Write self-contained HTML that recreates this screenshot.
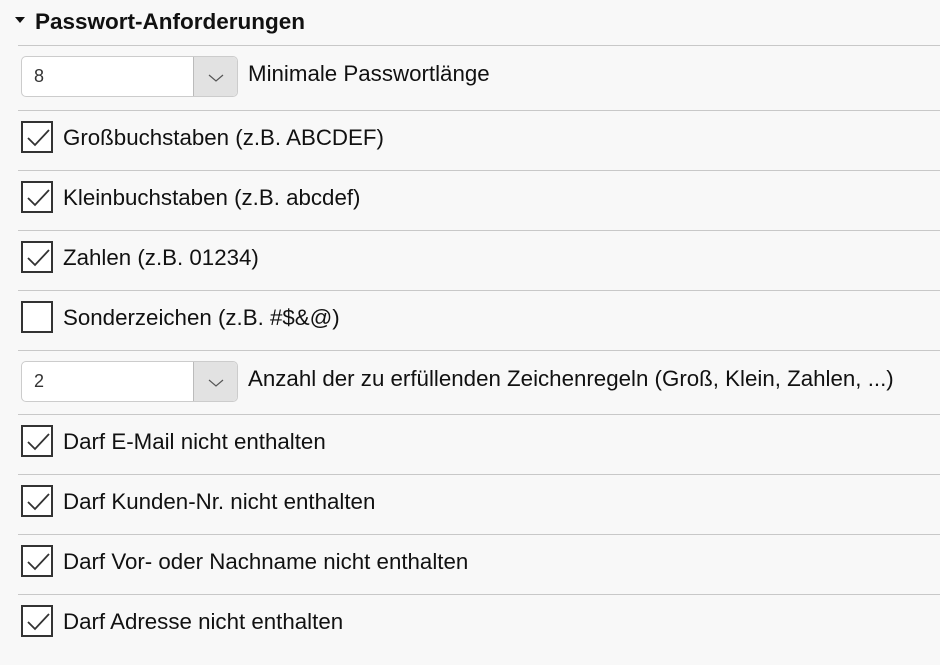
<!DOCTYPE html>
<html><head><meta charset="utf-8"><style>
*{margin:0;padding:0;box-sizing:border-box}
body{width:940px;height:665px;background:#f8f8f8;font-family:"Liberation Sans",sans-serif;color:#111;position:relative;overflow:hidden}
.h{position:absolute;left:35px;top:7px;font-size:22.5px;font-weight:bold;line-height:30px}
.tri{position:absolute;left:15px;top:17px;width:0;height:0;border-left:5px solid transparent;border-right:5px solid transparent;border-top:6px solid #111}
.line{position:absolute;left:18px;right:0;height:1px;background:#c8c8c8}
.cb{position:absolute;left:21px;width:32px;height:32px;border:2px solid #333;background:#fff}
.cb svg{position:absolute;left:3px;top:4px}
.t{position:absolute;left:63px;font-size:22.3px;line-height:30px;white-space:nowrap}
.sel{position:absolute;left:21px;width:217px;height:41px;border:1px solid #ccc;border-radius:5px;background:#fff;overflow:hidden}
.sel span{position:absolute;left:12px;top:9px;font-size:18px;color:#333}
.sel .b{position:absolute;right:0;top:0;width:44px;height:100%;background:#e2e2e2;border-left:1px solid #bbb}
.sel .b svg{position:absolute;left:14px;top:16px}
</style></head><body>
<div class="tri"></div><div class="h">Passwort-Anforderungen</div>
<div class="line" style="top:45px"></div>
<div class="sel" style="top:56px"><span>8</span><div class="b"><svg width="16" height="10"><path d="M1 2 L8 8 L15 2" fill="none" stroke="#555" stroke-width="1.2"/></svg></div></div>
<div class="t" style="left:248px;top:59px">Minimale Passwortlänge</div>
<div class="line" style="top:110px"></div>
<div class="cb" style="top:121px"><svg width="24" height="22"><path d="M2 11 L9 18 L23 3" fill="none" stroke="#333" stroke-width="1.8"/></svg></div>
<div class="t" style="top:123px">Großbuchstaben (z.B. ABCDEF)</div>
<div class="line" style="top:170px"></div>
<div class="cb" style="top:181px"><svg width="24" height="22"><path d="M2 11 L9 18 L23 3" fill="none" stroke="#333" stroke-width="1.8"/></svg></div>
<div class="t" style="top:183px">Kleinbuchstaben (z.B. abcdef)</div>
<div class="line" style="top:230px"></div>
<div class="cb" style="top:241px"><svg width="24" height="22"><path d="M2 11 L9 18 L23 3" fill="none" stroke="#333" stroke-width="1.8"/></svg></div>
<div class="t" style="top:243px">Zahlen (z.B. 01234)</div>
<div class="line" style="top:290px"></div>
<div class="cb" style="top:301px"></div>
<div class="t" style="top:303px">Sonderzeichen (z.B. #$&amp;@)</div>
<div class="line" style="top:350px"></div>
<div class="sel" style="top:361px"><span>2</span><div class="b"><svg width="16" height="10"><path d="M1 2 L8 8 L15 2" fill="none" stroke="#555" stroke-width="1.2"/></svg></div></div>
<div class="t" style="left:248px;top:364px">Anzahl der zu erfüllenden Zeichenregeln (Groß, Klein, Zahlen, ...)</div>
<div class="line" style="top:414px"></div>
<div class="cb" style="top:425px"><svg width="24" height="22"><path d="M2 11 L9 18 L23 3" fill="none" stroke="#333" stroke-width="1.8"/></svg></div>
<div class="t" style="top:427px">Darf E-Mail nicht enthalten</div>
<div class="line" style="top:474px"></div>
<div class="cb" style="top:485px"><svg width="24" height="22"><path d="M2 11 L9 18 L23 3" fill="none" stroke="#333" stroke-width="1.8"/></svg></div>
<div class="t" style="top:487px">Darf Kunden-Nr. nicht enthalten</div>
<div class="line" style="top:534px"></div>
<div class="cb" style="top:545px"><svg width="24" height="22"><path d="M2 11 L9 18 L23 3" fill="none" stroke="#333" stroke-width="1.8"/></svg></div>
<div class="t" style="top:547px">Darf Vor- oder Nachname nicht enthalten</div>
<div class="line" style="top:594px"></div>
<div class="cb" style="top:605px"><svg width="24" height="22"><path d="M2 11 L9 18 L23 3" fill="none" stroke="#333" stroke-width="1.8"/></svg></div>
<div class="t" style="top:607px">Darf Adresse nicht enthalten</div>
</body></html>
